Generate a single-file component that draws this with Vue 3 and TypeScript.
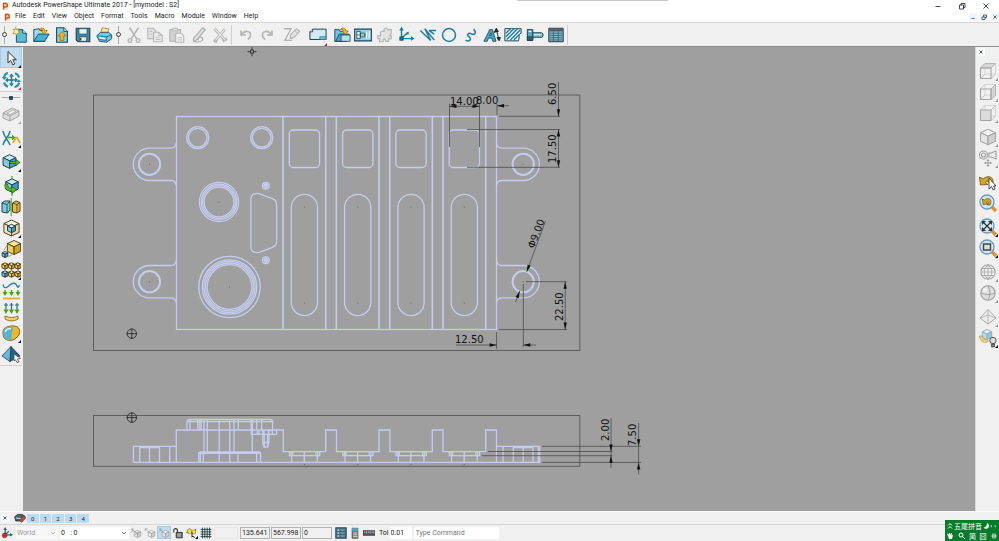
<script setup lang="ts">
import { ref } from 'vue'

type Shape = [d: string, fill: string, stroke?: string, width?: number]
interface Tool { name: string; icon: Shape[]; flyout?: string; active?: boolean }

const ink = '#24434f'
const teal = '#1f7f9f'
const pale = '#c6e9f5'
const grey = '#b5b5b5'
const mist = '#e2e2e2'
const gold = '#f0b51d'
const green = '#43a51f'

const circle = (x: number, y: number, r: number) =>
  `M${x - r} ${y}a${r} ${r} 0 1 0 ${2 * r} 0a${r} ${r} 0 1 0 ${-2 * r} 0Z`

function cube(x: number, y: number, r: number, faces: [string, string, string], line: string): Shape[] {
  const w = r * 0.95
  const h = r * 0.55
  return [
    [`M${x} ${y - r}L${x + w} ${y - h}L${x} ${y - r * 0.1}L${x - w} ${y - h}Z`, faces[0], line, 1],
    [`M${x - w} ${y - h}L${x} ${y - r * 0.1}V${y + r}L${x - w} ${y + h}Z`, faces[1], line, 1],
    [`M${x + w} ${y - h}L${x} ${y - r * 0.1}V${y + r}L${x + w} ${y + h}Z`, faces[2], line, 1],
  ]
}
const blue: [string, string, string] = ['#c8ecf6', '#7fcbe3', '#3f9dbd']
const yellow: [string, string, string] = ['#fbe9a8', '#efcf6a', '#cfa12c']
const cream: [string, string, string] = ['#fdf3d4', '#f7e7b8', '#ecd49a']
const plain: [string, string, string] = ['#f4f4f4', '#e4e4e4', '#d0d0d0']

const fileTools: Tool[] = [
  { name: 'New', icon: [['M6 4H13L17 8V18H6Z', '#58bedd', ink, 1], ['M13 4V8H17', pale, ink, 1], ['M5 1.5L6.2 4L9 3L7.6 5.6L10 7.5L7 8L6 10.5L4.6 8L2 8.4L3.8 6L2 3.6L4.6 4Z', '#fff6a0', '#8c8427', 0.7]] },
  { name: 'Open', icon: [['M2 17V4L8 3L9 5L14 5V17Z', '#9bdcf0', ink, 1], ['M2 17L7 9H19L14 17Z', '#3fb4da', ink, 1], ['M8 5C9 1.500 13.500 1.500 14.500 5H17L13.500 9.500L10 5H12C11 4 9.500 4 8 5Z', gold, '#8a6205', 0.7]] },
  { name: 'Import', icon: [['M4 2H12L16 6V18H4Z', '#7ed0e8', ink, 1.2], ['M12 2V6H16', pale, ink, 1], ['M10 6L14.500 11H12V16H8V11H5.500Z', gold, '#8a6205', 0.7]] },
  { name: 'Save', icon: [['M2.500 2.500H17.500V17.500H4.500L2.500 15.500Z', '#3c8ca8', ink, 1.3], ['M5.500 3H14.500V9H5.500Z', '#e4f4f8', ink, 0.8], ['M6 12H14V17H6Z', '#e9eef0', ink, 0.8], ['M7.500 13V16', 'none', ink, 1.5]] },
  { name: 'Print', icon: [['M6 9L8 2L15 3L14 9Z', '#ffe7a1', '#8b7a3d', 0.8], ['M2 11L6 7H15L18.500 10V14L13 18L5 17Z', '#6fcbe8', ink, 1], ['M3 11L13 12L18 10M13 12V17M5 15L12 16', 'none', '#167392', 1], ['M5 13L11 14', 'none', '#fff', 1.2]] },
]
const editTools: Tool[] = [
  { name: 'Cut', icon: [['M5 2L13 14M15 2L7 14', 'none', grey, 1.8], [circle(5.5, 16, 2) + circle(14.5, 16, 2), 'none', grey, 1.6]] },
  { name: 'Copy', icon: [['M2 2.500H8L11 5.500V14H2Z', mist, grey, 1.2], ['M8.500 7H14L18 10.500V17.500H8.500Z', '#ededed', grey, 1.2], ['M14 7V10.500H18M4 6H7M4 9H7M10.500 12.500H16M10.500 15H16', 'none', grey, 0.9]] },
  { name: 'Paste', icon: [['M2 4H14V17H2Z', '#d3d3d3', grey, 1.2], ['M5.500 2.500H10.500V5.500H5.500Z', mist, grey, 1], ['M8.500 8H14L17.500 11V18H8.500Z', '#f2f2f2', grey, 1.2], ['M10.500 13H15.500M10.500 15.500H15.500', 'none', grey, 0.9]] },
  { name: 'Format brush', icon: [['M14 2L17 4L9.500 13L6 16.500C3 17 3 13 6 11.500Z', mist, grey, 1.5], ['M3.500 17C9 19 16 17 13.500 13C11.500 11 8 14 9.500 16', 'none', grey, 1.4]] },
  { name: 'Delete', icon: [['M4 3L16 16M15.500 3.500L5 16M3 16L7 17.500M13 17L17.500 14', 'none', grey, 3.2], ['M4 3L16 16M15.500 3.500L5 16', 'none', '#eaeaea', 1.2]] },
]
const historyTools: Tool[] = [
  { name: 'Undo', icon: [['M4.500 5V10H10M5.500 9.500C8 4.500 15.500 5 15 11C14.700 13 13.500 14 12 15', 'none', grey, 1.9]] },
  { name: 'Redo', icon: [['M15.500 5V10H10M14.500 9.500C12 4.500 4.500 5 5 11C5.300 13 6.500 14 8 15', 'none', grey, 1.9]] },
]
const sheetTools: Tool[] = [
  { name: 'Edit selection', icon: [['M1 3H9L2 16H10', 'none', grey, 1.5], ['M8 14L9 9L15 3L18.500 6L12.500 12.500Z', mist, grey, 1.3], ['M13 5L16.500 8.500M8 14L11 12.500', 'none', grey, 1]] },
  { name: 'Sheet', flyout: '#e02020', icon: [['M4 3.500H19V15H1V6.500Z', '#cfeaf4', ink, 1.1], ['M1 6.500H4V3.500', '#fff', ink, 1], ['M12 12H19V15H12Z', '#6fbcd6', '#3b7386', 0.8]] },
]
const drawTools: Tool[] = [
  { name: 'Open drawing', icon: [['M2 17V4H7L8 6H13V17Z', '#6bc5e0', ink, 1], ['M3 17L7 9H18L15 17Z', '#3ea9cc', ink, 1], ['M9 10H19V17H9Z', '#b3e1ef', ink, 0.9], ['M8 4C10 1 14 2 14.500 5.500H17L13.500 9.500L10 5.500H12C11 4 10 4 8 4Z', gold, '#8a6205', 0.7]] },
  { name: 'Drawing view', icon: [['M0.700 3.500H19.300V16.500H0.700Z', '#8fd3e8', ink, 1.2], ['M3 6H7V14H3ZM7 8H12V12H7Z', '#d8eff6', ink, 0.9], ['M14 6V14M17 6V14', 'none', '#e8f8fc', 1.4], ['M3 10H13', 'none', ink, 0.6]] },
  { name: 'Assembly', icon: [['M2 11H5V8C4 6 7 5.500 9 6C8 2 13 1.500 13 4H17V8L15 11H17V14H14V17H11L10 14.500L8 15V17.500H4V14H2Z', mist, grey, 1.3]] },
  { name: 'Workplane', icon: [['M5 3V14H18M5 14L12 7', 'none', teal, 1.6], ['M2.500 5L5 0.500L7.500 5ZM15.500 11.500L19.500 14L15.500 16.500ZM13 6V9.500H9.500Z', teal], ['M3 12H7V16H3Z', '#236a83', ink, 0.6]] },
  { name: 'Line', icon: [['M1.500 5L13 16L6.500 3L17 15.500', 'none', teal, 1.6], ['M11 5H19M11 5L17 9', 'none', teal, 1.6]] },
  { name: 'Arc', icon: [[circle(10, 10, 7.2), 'none', teal, 1.7]] },
  { name: 'Curve', icon: [['M5 16C10 18 12 14 9 12C5 9 9 7 12 9C17 10.500 16.500 6 14 3.500', 'none', teal, 1.7]] },
  { name: 'Text', icon: [['M1 17L7.500 4H10.500L14.500 17H11L10 13.500H6L4.800 17ZM7.200 10.500H9.500L8.800 7.500Z', '#43a9c8', ink, 0.9], ['M15 4L17.500 15M12.500 7L14.700 2.500L17 6ZM15.500 13L18 16.500L19.300 12.500Z', '#222', '#222', 1]] },
  { name: 'Hatch', icon: [['M1 3H19V8C15 9 18 12 16 16.500H1Z', '#e3f5fa', ink, 1.1], ['M2 8L7 3M2 12L11 3M3 15L15 3M7 15.500L18 4.500M11 15.500L17 9.500', 'none', teal, 1.5]] },
  { name: 'Bolt', icon: [['M1.500 4H7.500V16H1.500Z', '#53aac5', ink, 1.1], ['M1.500 12H7.500V16H1.500Z', '#28657b', ink, 1], ['M7.500 7.500H17.500L19 9V11L17.500 12.500H7.500Z', '#78c8df', ink, 1.1], ['M3 6H6M9 9.500H16', 'none', '#def6fd', 1.2]] },
  { name: 'Parts table', icon: [['M2 2.500H18V17.500H2Z', '#7cbfd4', '#333', 1.1], ['M2.500 3.500H17.500V6H2.500Z', '#555'], ['M2.500 8H17.500M2.500 10.500H17.500M2.500 13H17.500M2.500 15.500H17.500M7 6V17M12.500 6V17', 'none', '#3d6673', 1]] },
]

const topLeft: Tool[] = [
  { name: 'Select', active: true, flyout: '#111', icon: [['M7 3.500V15L9.700 12.400L11.800 16.800L13.800 15.800L11.800 11.700H15.300Z', '#fff', '#333', 1]] },
  { name: 'Rotate view', flyout: '#e02020', icon: [['M10.500 6V14M6.500 10H14.500', 'none', teal, 1.6], ['M10.500 3.500L13 6.500H8ZM10.500 16.500L8 13.500H13ZM4 10L7 7.500V12.500ZM17 10L14 12.500V7.500Z', teal], ['M3 7C3.500 4.500 5 3.300 7 3M14 3.300C16 4 17.500 5.500 18 7.500M18 12.500C17.500 15 15.500 16.700 13.500 17M7 16.800C5 16 3.500 14.500 3 12.500', 'none', '#2d91b3', 2.2], ['M1 7H6L3 10ZM15 12H20L18 9.500Z', '#2d91b3']] },
]
const createLeft: Tool[] = [
  { name: 'Solid block', flyout: '#aaa', icon: [['M2 9L11 4L18 7V12L9 17L2 14Z', '#dcdcdc', '#a6a6a6', 1], ['M2 9L9 12L18 7M9 12V17', 'none', '#a6a6a6', 1], ['M6 9L12 6L15 7.500L9 10.500Z', '#f7f7f7', '#a6a6a6', 0.8]] },
  { name: 'Convert wireframe', flyout: '#111', icon: [['M2 3C3 9 7 12 9 17M9 3C8 9 3 12 2 17', 'none', teal, 1.5], ['M7 9.500H12', 'none', green, 1.6], ['M11 6.800L14.500 9.500L11 12.200Z', green], ['M12 15L15 9.500H16L19 15', 'none', '#e3a31c', 1.6]] },
  { name: 'Extrude', flyout: '#111', icon: [...cube(8.5, 9.5, 6.8, blue, ink), ['M9 9.500H15V7.500L19 10.500L15 13.500V11.500H9Z', '#55b62d', '#296913', 0.8]] },
]
const modifyLeft: Tool[] = [
  { name: 'Revolve', icon: [...cube(11, 9.5, 6.6, blue, ink), ['M11 0V3M11 16V20', 'none', '#48ad31', 1.3], ['M4 8C3 13 7 15.500 11 15V17.500L15.500 13.500L11 10.500V12.500C8 12.500 6.500 11 6.500 8Z', '#55b62d', '#296913', 0.8]] },
  { name: 'Mirror', icon: [['M1 6L4 4H9V13L6.500 16L1 15Z', '#7fcbe3', ink, 1], ['M1 6L6 7.500L9 4M6 7.500V16', 'none', ink, 0.9], ['M11.500 6L15 4L19 5.500V14L16 16L11.500 15Z', '#e5b944', '#59450f', 1], ['M11.500 6L16 7.500L19 5.500M16 7.500V16', 'none', '#59450f', 0.9], ['M10.200 1V19', 'none', '#4abd31', 1.2]] },
  { name: 'Core', flyout: '#111', icon: [...cube(10.5, 10, 8, cream, '#4d4530'), ...cube(10.5, 10.5, 4.2, blue, ink)] },
  { name: 'Scale', icon: [...cube(13, 8.5, 7, yellow, '#59450f'), ...cube(4, 15.5, 3, blue, ink), ['M3 11L7 5M6 18L11 16', 'none', '#53b647', 0.7]] },
  { name: 'Pattern', flyout: '#111', icon: [...cube(4, 6, 3.2, yellow, '#59450f'), ...cube(10.5, 6, 3.2, yellow, '#59450f'), ...cube(17, 6, 3.2, yellow, '#59450f'), ...cube(4, 14, 3.2, blue, ink), ...cube(10.5, 14, 3.2, yellow, '#59450f'), ...cube(17, 14, 3.2, yellow, '#59450f')] },
]
const surfaceLeft: Tool[] = [
  { name: 'Project curve', icon: [['M2 3.500C3 9 7 6 9 4C12 1 15 2 16 5C16.500 7 18 6 18.500 4', 'none', '#2d86a6', 1.4], ['M4 9V12M10.500 9V12M17 9V12', 'none', green, 1.4], ['M1.500 11H6.500L4 15ZM8 11H13L10.500 15ZM14.500 11H19.500L17 15Z', green], ['M2 17.500H19', 'none', '#e4ad35', 1.8]] },
  { name: 'Project surface', icon: [['M5 1V9M10.500 1V9M16 1V9M3 3H7M8.500 3H12.500M14 3H18', 'none', '#2b6f83', 1.2], ['M2.500 7.500H7.500L5 12ZM8 7.500H13L10.500 12ZM13.500 7.500H18.500L16 12Z', green], ['M4 14C8 16 13 16 17 14V17C13 19.500 8 19.500 4 17Z', '#efcf6a', '#7a5f1d', 0.8]] },
  { name: 'Morph', flyout: '#111', icon: [['M2 9C2 4 9 2.500 13 3C20 3.500 20 11 16 14C13 18 8 18 5 16.500C2 15 2 12 2 9Z', '#f2b727', '#725b18', 0.9], ['M2.500 9C2.500 4.500 9 3.300 12 3.500L10 17C4 17 2.500 14 2.500 9Z', '#55b5d3'], ['M4 9C5 6 7 5.500 10 5.500', 'none', '#d7f3fb', 1.6]] },
  { name: 'Pyramid', icon: [['M10 2.500L1 12L9 17.500Z', '#67b9d8', ink, 0.8], ['M10 2.500L9 17.500L19 12Z', '#1c668a', ink, 0.8], ['M13 10L19.500 14.500L16.500 15L18 18L16 18.500L14.500 15.800L13 17Z', '#fff', '#555', 0.8]] },
]

const box = (front: string, extra: Shape[]): Shape[] => [
  ['M7 2.500H17.500V13H7Z', '#f2f2f2', '#cecece', 0.8], ['M2.500 7L7 2.500M13 7L17.500 2.500M13 17.500L17.500 13M2.500 17.500L7 13', 'none', '#bdbdbd', 0.9],
  ...extra, ['M2.500 7H13V17.500H2.500Z', front, '#a5a5a5', 1.1],
]
const lens: Shape[] = [['M13.500 13.500L18 18', 'none', '#e98e24', 3.2], [circle(9, 9, 7), '#cfe6f5', '#6d9cba', 1.3]]
const viewGroups: Tool[][] = [
  [
    { name: 'Top view', flyout: '#999', icon: box('none', [['M2.500 7L7 2.500H17.500L13 7Z', '#d6d6d6', '#adadad', 0.8]]) },
    { name: 'Right view', flyout: '#999', icon: box('none', [['M13 7L17.500 2.500V13L13 17.500Z', '#d6d6d6', '#adadad', 0.8]]) },
    { name: 'Front view', flyout: '#999', icon: box('#dcdcdc', []) },
  ],
  [
    { name: 'Isometric view', flyout: '#999', icon: cube(10, 10, 7.8, plain, '#a0a0a0') },
    { name: 'View options', flyout: '#999', icon: [[circle(5.5, 7, 4) + circle(5.500, 7, 2), 'none', '#a0a0a0', 1.1], ['M11 5H13L18 3V11L13 9H11Z', '#ececec', '#a0a0a0', 1.1], ['M10 12V18M7 15H13', 'none', '#999', 1], ['M10 11L11.500 13H8.500ZM10 19L8.500 17H11.500ZM6 15L8 13.500V16.500ZM14 15L12 16.500V13.500Z', '#999']] },
  ],
  [
    { name: 'Previous view', icon: [['M1.500 5L2.500 13L10 12.500L7.500 10.500C9.500 8.500 11.500 9.500 11.500 12L15 11C16 4 9 3 5 7Z', '#d9a520', '#65501a', 0.8], ['M11 6V17L13.500 14.500L15 18L17 17L15.500 14H18Z', '#fff', '#222', 0.8]] },
    { name: 'Last zoom', icon: [...lens, ['M4.500 6L5 11.500L10 11L8 9.500C10 8 11.500 9.500 9.500 12L12 12C15 6 10 4 6.500 7Z', '#d9a520', '#65501a', 0.7]] },
  ],
  [
    { name: 'Zoom full', flyout: '#111', icon: [...lens, ['M5.500 5.500L12.500 12.500M12.500 5.500L5.500 12.500', 'none', '#333', 1.2], ['M4 4H8L4 8ZM14 4V8L10 4ZM4 14V10L8 14ZM14 14H10L14 10Z', '#333']] },
    { name: 'Zoom box', flyout: '#111', icon: [...lens, ['M5.500 6H12.500V12H5.500Z', '#d5e2dc', '#444', 1.4]] },
  ],
  [
    { name: 'Wireframe', flyout: '#999', icon: [[circle(10, 10, 7.2), '#f1f1f1', '#a5a5a5', 1.1], ['M10 3V17M3 10H17M10 3C5 7 5 13 10 17M10 3C15 7 15 13 10 17M4 6.500H16M4 13.500H16', 'none', '#aaa', 0.9]] },
    { name: 'Shaded', flyout: '#999', icon: [[circle(10, 10, 7.2), '#dedede', '#9d9d9d', 1.1], ['M10 3C12.500 7 12.500 13 10 17M3 10C7 12 13 12 17 10', 'none', '#999', 0.9], [circle(7, 7, 2), '#f3f3f3']] },
  ],
  [
    { name: 'Transparent', flyout: '#999', icon: [['M10 2.500L18 11L10 17L2 11Z', '#ededed', '#a5a5a5', 0.9], ['M10 2.500V17M2 11L10 8L18 11', 'none', '#aaa', 0.8]] },
    { name: 'Lighting', flyout: '#111', icon: [...cube(9, 6.5, 5, ['#e4f4fa', '#b7dcea', '#93c6db'], '#8eb3c2'), ['M1.500 8C2 14 7 16 10.500 13L7.500 11C5.500 11.500 4.500 10.500 4.500 8Z', '#efd27e', '#b69643', 0.7], [circle(15, 12.5, 3.2), '#ddd', '#555', 1], ['M13.500 16H16.500V19H13.500Z', '#777', '#444', 0.7]] },
  ],
]

const greyCube: Shape[] = [...cube(12.5, 11.5, 6, plain, '#999'), ['M2 3L8 8M3 9L5 2M2 5H7', 'none', '#a5a5a5', 1.3]]
const snapTools: Tool[] = [
  { name: 'Snap points', icon: [...greyCube, ['M8 7L15 14M15 7L8 14', 'none', '#999', 1.1]] },
  { name: 'Snap edges', icon: [...cube(12.5, 11.5, 6, plain, '#999'), ['M2 3L8 8M2 3H6M2 3V7', 'none', '#aaa', 1.4]] },
  { name: 'Snap faces', active: true, icon: greyCube },
  { name: 'Lock', icon: [['M7 9H17V18H7Z', '#777', '#222', 1.4], ['M3 9V5C3 2 9 2 9 5V9', 'none', '#333', 1.8], ['M9 12H15M9 15H15', 'none', '#ddd', 1.2]] },
  { name: 'Smart cursor', flyout: '#111', icon: [['M1 10L6 4L10 9L17 4', 'none', '#555', 2], [circle(6, 7, 4), '#ffdf35', '#86701b', 1], [circle(13, 8, 3.4), '#ffdf35', '#86701b', 1], ['M10 9V17L12 15L14 18', 'none', '#222', 1.6]] },
  { name: 'Grid', icon: [['M4 1V19M8 1V19M12 1V19M16 1V19M1 4H19M1 8H19M1 12H19M1 16H19', 'none', '#1d4048', 1.5]] },
]
const readoutTools: Tool[] = [
  { name: 'Coordinates', icon: [['M1 1H19V19H1Z', '#3d6977', '#2e4a54', 1.2], ['M4 5H7M4 10H7M4 15H7', 'none', '#cfe9ef', 2.6], ['M9 5H16M9 10H16M9 15H16', 'none', '#8ec1d0', 1.8]] },
  { name: 'Calculator', icon: [['M5 2H15V19H5Z', '#6c7479', '#555', 1], ['M5 2H15V7H5Z', '#48a8cc'], ['M7 10H14M7 13H14M7 16H14', 'none', '#ddd', 1.6]] },
  { name: 'Measure', icon: [['M0 6H20V14H0Z', '#555', '#333', 1], ['M3 7V10M6 7V11M9 7V10M12 7V11M15 7V10M18 7V11', 'none', '#eee', 1]] },
]
const axes: Shape[] = [['M7 2V13H18M7 13L13 7', 'none', '#256c86', 2.2], ['M4 5L7 0L10 5ZM15 10L20 13L15 16Z', '#256c86'], [circle(6, 14, 4), '#d9252a', '#8c1519', 0.8]]
const eraser: Shape[] = [['M1 8L6 4H14L18 7L12 15H3Z', '#41636d', '#222', 1.2], ['M3 10L12 11', 'none', '#c4dde4', 1.8], ['M9 14L16 6L20 9L13 17Z', '#bd5046', '#551d18', 1]]

const menus = ['File', 'Edit', 'View', 'Object', 'Format', 'Tools', 'Macro', 'Module', 'Window', 'Help']
const levels = [0, 1, 2, 3, 4]
const workplane = ref('World')
const level = ref('0  : 0')
const coords = ref(['135.641', '567.998', '0'])
const tolerance = ref('0.01')
const command = ref('')

const bays = [0, 1, 2, 3].map((i) => i * 53.3)
const lugs = [
  { x: 149.5, y: 164.3, side: 1 }, { x: 149.5, y: 281.7, side: 1 },
  { x: 523.2, y: 164.3, side: -1 }, { x: 523.2, y: 281.7, side: -1 },
]
const ribs = [283, 325.7, 336.3, 379, 389.7, 432.3, 443, 485.7]
const rings = [
  { x: 197.7, y: 137.7, radii: [11, 9.3] }, { x: 261.7, y: 137.7, radii: [11, 9.3] },
  { x: 219, y: 202, radii: [19.6, 17.8, 16.4, 14.9] },
  { x: 229.5, y: 287, radii: [30.7, 27.2, 25.6, 24, 22.3] },
]
const screws = [185.7, 260.3]
const arrows = [
  { x: 449.5, y: 106.3, a: 180 }, { x: 479.5, y: 106.3, a: 0 }, { x: 497, y: 105.7, a: 180 },
  { x: 558.5, y: 116.3, a: 90 }, { x: 558.5, y: 129.5, a: -90 }, { x: 558.5, y: 167.3, a: 90 },
  { x: 526.7, y: 271.8, a: 111 }, { x: 519.7, y: 291, a: -69 },
  { x: 565.2, y: 281.7, a: -90 }, { x: 565.2, y: 329.6, a: 90 },
  { x: 496.6, y: 345, a: 0 }, { x: 523.3, y: 345, a: 180 },
  { x: 611, y: 451.5, a: 90 }, { x: 611, y: 455.7, a: -90 },
  { x: 638.6, y: 446.3, a: 90 }, { x: 638.6, y: 462.4, a: -90 },
]
const dimensions = [
  { text: '14.00', x: 450, y: 105, a: 0 }, { text: '8.00', x: 476, y: 104, a: 0 },
  { text: '6.50', x: 556, y: 105, a: -90 }, { text: '17.50', x: 556, y: 163, a: -90 },
  { text: 'Φ9.00', x: 534, y: 249, a: -69 }, { text: '22.50', x: 563, y: 321, a: -90 },
  { text: '12.50', x: 455, y: 343, a: 0 }, { text: '2.00', x: 609, y: 441, a: -90 },
  { text: '7.50', x: 636, y: 446, a: -90 },
]
const profile = 'M176.300 462.300V430H283.300V451.700H325.700V430H336.500V451.700H379V430H390V451.700H432.300V430H443V451.700H485.700V430H496.500V462.300'
const strips = { file: fileTools, edit: editTools, history: historyTools, sheet: sheetTools, draw: drawTools }
const leftStrips = [createLeft, modifyLeft, surfaceLeft]
</script>

<template>
  <div class="app">
    <header>
      <div class="title">
        <svg class="logo" viewBox="0 0 8 8" aria-hidden="true"><path class="logo-back" d="M2 0H7V8H2Z" /><path class="logo-mark" d="M2.500 7.500V1.500H4.500C7 1.500 7 5 4.500 5H3" /></svg>
        <h1>Autodesk PowerShape Ultimate 2017 - [mymodel : S2]</h1>
        <div class="window-buttons">
          <button aria-label="Minimize"><svg viewBox="0 0 8 8"><path d="M1.500 4.500H6.500" /></svg></button>
          <button aria-label="Restore"><svg viewBox="0 0 8 8"><path d="M1.500 3H5.500V7H1.500ZM3 3V1.500H7V5.500H5.500" /></svg></button>
          <button aria-label="Close"><svg viewBox="0 0 8 8"><path d="M1.500 1.500L6.500 6.500M6.500 1.500L1.500 6.500" /></svg></button>
        </div>
        <div class="shade"></div>
      </div>
      <div class="menubar">
        <svg class="logo" viewBox="0 0 8 8" aria-hidden="true"><path class="logo-back" d="M2 0H7V8H2Z" /><path class="logo-mark" d="M2.500 7.500V1.500H4.500C7 1.500 7 5 4.500 5H3" /></svg>
        <nav><a v-for="m in menus" :key="m" href="#">{{ m }}</a></nav>
        <div class="document-buttons">
          <button aria-label="Minimize document"><svg viewBox="0 0 8 8"><path d="M2.500 5.500H5.500" /></svg></button>
          <button aria-label="Restore document"><svg viewBox="0 0 8 8"><path d="M2 4H5V6.500H2ZM3.500 4V2H6.500V4.500H5" /></svg></button>
          <button aria-label="Close document"><svg viewBox="0 0 8 8"><path d="M2.500 2.500L5.500 5.500M5.500 2.500L2.500 5.500" /></svg></button>
        </div>
      </div>
      <div class="toolbar">
        <template v-for="(tools, key) in strips" :key="key">
          <span v-if="key === 'file' || key === 'edit'" class="grip"></span>
          <span v-if="key === 'history'" class="rule"></span>
          <div class="strip" :class="key">
            <button v-for="t in tools" :key="t.name" class="tool" :aria-label="t.name">
              <svg class="icon" viewBox="0 0 20 20"><path v-for="(s, i) in t.icon" :key="i" :d="s[0]" :fill="s[1]" :stroke="s[2] || 'none'" :stroke-width="s[3] || 0" fill-rule="evenodd" /></svg>
              <svg v-if="t.flyout" class="flyout" viewBox="0 0 3 3"><path d="M3 0V3H0Z" :fill="t.flyout" /></svg>
            </button>
          </div>
        </template>
        <span class="rule"></span>
      </div>
    </header>

    <main>
      <aside class="left">
        <div class="column first">
          <button v-for="t in topLeft" :key="t.name" class="tool" :class="{ active: t.active }" :aria-label="t.name">
            <svg class="icon" viewBox="0 0 20 20"><path v-for="(s, i) in t.icon" :key="i" :d="s[0]" :fill="s[1]" :stroke="s[2] || 'none'" :stroke-width="s[3] || 0" /></svg>
            <svg v-if="t.flyout" class="flyout" viewBox="0 0 3 3"><path d="M3 0V3H0Z" :fill="t.flyout" /></svg>
          </button>
        </div>
        <span class="level-grip"></span>
        <div v-for="(tools, n) in leftStrips" :key="n" class="column" :class="{ roomy: n === 0 }">
          <button v-for="t in tools" :key="t.name" class="tool" :aria-label="t.name">
            <svg class="icon" viewBox="0 0 20 20"><path v-for="(s, i) in t.icon" :key="i" :d="s[0]" :fill="s[1]" :stroke="s[2] || 'none'" :stroke-width="s[3] || 0" /></svg>
            <svg v-if="t.flyout" class="flyout" viewBox="0 0 3 3"><path d="M3 0V3H0Z" :fill="t.flyout" /></svg>
          </button>
        </div>
        <span class="end"></span>
      </aside>

      <section class="canvas" aria-label="Model view">
        <svg class="drawing" viewBox="23 47 952 464" preserveAspectRatio="xMinYMin meet">
          <g class="frame">
            <rect x="93.5" y="95" width="486.300" height="255.500" />
            <rect x="93.500" y="415.500" width="486.300" height="50.800" />
          </g>
          <g class="model">
            <rect x="176.500" y="116.500" width="320" height="213" />
            <path v-for="x in ribs" :key="x" class="rib" :d="`M${x} 116.500V329.500`" />
            <g v-for="(l, i) in lugs" :key="i" :transform="`translate(${l.x} ${l.y}) scale(${l.side} 1)`">
              <path d="M26.800 -21.500Q26.300 -16.200 21 -16.200H0A16.200 16.200 0 0 0 0 16.200H21Q26.300 16.200 26.800 21.500" />
              <circle class="hole" r="10.600" />
              <path class="dot" d="M-0.500 0H0.500" />
            </g>
            <g v-for="(r, i) in rings" :key="i">
              <circle v-for="q in r.radii" :key="q" :cx="r.x" :cy="r.y" :r="q" />
              <path v-if="i > 1" class="dot" :d="`M${r.x - 0.5} ${r.y}h1`" />
            </g>
            <g v-for="y in screws" :key="y">
              <circle cx="265.800" :cy="y" r="3.400" /><circle cx="265.800" :cy="y" r="1.700" />
              <path :d="`M262.300 ${y}h7M265.800 ${y - 3.5}v7`" />
            </g>
            <path d="M250.800 199.500Q251 192.500 259 193.600L272.500 198.600Q276.700 200.500 276.700 205V241Q276.700 245.500 272.500 247.400L259 252.400Q251 253.500 250.800 246.500Z" />
            <g v-for="b in bays" :key="b" :transform="`translate(${b} 0)`">
              <rect x="289.300" y="130" width="30.300" height="37.500" rx="4" />
              <rect x="291.300" y="194.300" width="26.200" height="121.300" rx="13.100" />
              <path class="dot" d="M303.900 207h1M303.900 303h1M303.900 464.500h1" />
              <path d="M289.500 451.700V455.700H319.700V451.700M291.200 451.700V455.700M292.700 451.700V455.700M316 451.700V455.700M317.700 451.700V455.700M291.700 455.700V462.300M304.300 451.700V462.300M317.300 455.700V462.300" />
            </g>
            <path :d="profile" />
            <path d="M133.400 462.300H540M133.400 462.300V446.300H176.300M139.700 447.300V462.300M139.700 447.600H159.500M149.500 447V462.300M159.500 447V462.300M169.700 446.300V462.300" />
            <path d="M496.500 446.300H539.700V462.300M503 446.300V462.300M513.300 447.600H533M513.300 447V462.300M523.200 447V462.300M533 447V462.300M538.300 447V462.300" />
            <path d="M187 430V422Q187 419.300 190 419.300H270Q272.600 419.300 272.600 422V430M187 421.500H272.600M190 420V430M197.700 419.500V430M199.700 419.500V430M201.300 419.500V430M204 419.500V451.700M207.300 419.500V451.700M219.200 419.500V462.300M229.700 419.500V462.300M234 419.500V451.700M238.300 419.500V430M251.200 419.500V430M252.300 419.500V451.700M256.700 419.500V430M261.700 419.500V430" />
            <path d="M198.700 462.300V454Q198.700 452 201 452H258.500Q260.600 452 260.600 454V462.300M198.700 453.300H260.600M200.300 453V462.300M203.300 453V462.300M238 453V462.300M256.700 453V462.300" />
            <path d="M251.200 430V434.300H276.700V430M257.300 430V434.300M259 430V434.300M264 430V434.300M268.500 430V434.300M272.300 430V434.300M262.700 430V442.500H269V430M264.300 434V447H267.500V434M262.700 442.500L264 447M269 442.500L267.500 447" />
          </g>
          <g class="leader">
            <path d="M449.500 104V147M479.500 104V147M449.500 106.300H479.500M497 104V115M497 105.700H509M499 116.300H560M467 129.500H560M467 167.300H560M558.500 82V116M558.500 129.500V167.300" />
            <path d="M545.500 221L526.700 271.800M515.500 302L519.700 291M526 281.700H567M499 329.600H567M565.200 281.700V329.600M456 345H496.600M496.600 332V349M523.300 284V347M523.300 345H536" />
            <path d="M542 446.300H641M488 451.500H612.500M482 455.700H612.500M542 462.400H641M611 418V468M638.600 423V474.500" />
          </g>
          <g class="arrow"><path v-for="(a, i) in arrows" :key="i" d="M0 0L-7 -1.700V1.700Z" :transform="`translate(${a.x} ${a.y}) rotate(${a.a})`" /></g>
          <g class="dimension"><text v-for="(d, i) in dimensions" :key="i" :transform="`translate(${d.x} ${d.y}) rotate(${d.a})`">{{ d.text }}</text></g>
          <g class="datum">
            <circle cx="131.800" cy="333.700" r="4.700" /><path d="M126.500 333.700H137.100M131.800 328.400V339" />
            <circle cx="131.800" cy="417.600" r="4.700" /><path d="M126.500 417.600H137.100M131.800 412.300V422.900" />
            <path d="M247.500 51.700H250.500M253.500 51.700H256.500M252 47.200V50.200M252 53.200V56.200M250.500 50.200H253.500V53.200H250.500Z" />
          </g>
        </svg>
      </section>

      <aside class="right">
        <button class="close" aria-label="Close toolbar"><svg viewBox="0 0 8 8"><path d="M2.500 2.500L5.500 5.500M5.500 2.500L2.500 5.500" /></svg></button>
        <div v-for="(tools, n) in viewGroups" :key="n" class="column">
          <button v-for="t in tools" :key="t.name" class="tool" :aria-label="t.name">
            <svg class="icon" viewBox="0 0 20 20"><path v-for="(s, i) in t.icon" :key="i" :d="s[0]" :fill="s[1]" :stroke="s[2] || 'none'" :stroke-width="s[3] || 0" /></svg>
            <svg v-if="t.flyout" class="flyout" viewBox="0 0 3 3"><path d="M3 0V3H0Z" :fill="t.flyout" /></svg>
          </button>
        </div>
      </aside>
    </main>

    <footer>
      <div class="levels">
        <button class="close" aria-label="Close level bar"><svg viewBox="0 0 8 8"><path d="M2.500 2.500L5.500 5.500M5.500 2.500L2.500 5.500" /></svg></button>
        <svg class="small" viewBox="0 0 20 20" aria-hidden="true"><path v-for="(s, i) in eraser" :key="i" :d="s[0]" :fill="s[1]" :stroke="s[2]" :stroke-width="s[3]" /></svg>
        <div class="tabs"><button v-for="n in levels" :key="n">{{ n }}</button></div>
      </div>
      <div class="status">
        <svg class="small" viewBox="0 0 20 20" aria-hidden="true"><path v-for="(s, i) in axes" :key="i" :d="s[0]" :fill="s[1]" :stroke="s[2] || 'none'" :stroke-width="s[3] || 0" /></svg>
        <div class="picker world">
          <select v-model="workplane" aria-label="Workplane" disabled><option>World</option></select>
          <svg viewBox="0 0 8 8"><path d="M2 3L4 5L6 3" /></svg>
        </div>
        <div class="picker level">
          <select v-model="level" aria-label="Level"><option value="0  : 0">0 &nbsp;&nbsp;: 0</option></select>
          <svg viewBox="0 0 8 8"><path d="M2 3L4 5L6 3" /></svg>
        </div>
        <div class="snaps">
          <button v-for="t in snapTools" :key="t.name" class="mini" :class="{ active: t.active }" :aria-label="t.name">
            <svg class="small" viewBox="0 0 20 20"><path v-for="(s, i) in t.icon" :key="i" :d="s[0]" :fill="s[1]" :stroke="s[2] || 'none'" :stroke-width="s[3] || 0" /></svg>
            <svg v-if="t.flyout" class="flyout" viewBox="0 0 3 3"><path d="M3 0V3H0Z" :fill="t.flyout" /></svg>
          </button>
        </div>
        <span class="blank"></span>
        <div class="coords"><input v-for="(c, i) in coords" :key="i" v-model="coords[i]" :aria-label="'XYZ'[i]"></div>
        <div class="readouts">
          <button v-for="t in readoutTools" :key="t.name" class="mini" :aria-label="t.name">
            <svg class="small" viewBox="0 0 20 20"><path v-for="(s, i) in t.icon" :key="i" :d="s[0]" :fill="s[1]" :stroke="s[2] || 'none'" :stroke-width="s[3] || 0" /></svg>
          </button>
        </div>
        <label for="tolerance">Tol</label>
        <input id="tolerance" v-model="tolerance" class="tolerance">
        <input v-model="command" class="command" aria-label="Command" placeholder="Type Command">
      </div>
    </footer>

    <div class="ime" lang="zh">
      <div><svg viewBox="0 0 8 8"><path d="M2 3.500L4 1.500L6 3.500M2 6.500L4 4.500L6 6.500" /></svg><span>五尾拼音</span><svg viewBox="0 0 8 8"><path class="solid" d="M5 1A3 3 0 1 1 1.500 5.500C4 5.500 5 3 5 1Z" /></svg><svg viewBox="0 0 8 8"><path class="solid" d="M1.500 3A1 1 0 1 0 2.500 4.500L1.500 6M5.500 3A1 1 0 1 0 6.500 4.500L5.500 6" /></svg></div>
      <div><svg viewBox="0 0 8 8"><path class="solid" d="M2 4L1 2L2 1.500L3 3V1H4V3L5 1L6 1.500L5.500 3.500L7 3L6 7H3Z" /></svg><svg viewBox="0 0 8 8"><circle cx="3" cy="3" r="2" /><path d="M4.500 4.500L7 7" /></svg><span>简</span><span>囧</span><svg viewBox="0 0 8 8"><path class="gear" d="M2.500 2.500h3v3h-3Z" /></svg></div>
    </div>
  </div>
</template>

<style>
body { margin: 0; }
</style>

<style scoped>
.app { min-height: 100vh; display: flex; flex-direction: column; background: #f0f0f0; color: #1c1c1c; font: 7px/10px Roboto, "Noto Sans CJK SC", sans-serif; position: relative; overflow: hidden; }
* { box-sizing: border-box; }
button { appearance: none; border: 0; background: none; padding: 0; margin: 0; font: inherit; color: inherit; display: grid; place-items: center; }
input, select { font: inherit; color: inherit; margin: 0; border-radius: 0; min-width: 0; }
a { color: inherit; text-decoration: none; }
svg { display: block; flex: none; }
header, footer { flex: none; }
.title { height: 11px; display: flex; align-items: center; gap: 3px; padding-left: 1px; background: #fff; position: relative; }
h1 { margin: 0; font-size: 7px; font-weight: 400; line-height: 11px; }
.logo { width: 8px; height: 8px; }
.logo-back { fill: #fbe0cc; }
.logo-mark { fill: none; stroke: #c9581a; stroke-width: 1.5; }
.window-buttons { margin-left: auto; display: flex; gap: 16px; padding-right: 9px; }
.window-buttons svg, .document-buttons svg, .close svg { width: 8px; height: 8px; fill: none; stroke: #333; stroke-width: 0.9; }
.shade { position: absolute; left: 517px; top: 0; width: 151px; height: 1px; background: #c8c8c8; }
.menubar { height: 11px; display: flex; align-items: center; padding-left: 3px; background: #fff; }
nav { display: flex; gap: 7px; padding-left: 4px; }
nav a { line-height: 11px; }
.document-buttons { margin-left: auto; display: flex; gap: 3px; }
.document-buttons svg { background: #f1f4f8; stroke: #3d566e; }
.toolbar { height: 25px; display: flex; align-items: center; border-top: 1px solid #d6d6d6; border-bottom: 1px solid #8b8b8b; }
.grip { width: 9px; height: 18px; display: grid; place-items: center; background: linear-gradient(#aaa, #aaa) center / 1px 18px no-repeat; }
.grip::before { content: ""; width: 5px; height: 5px; border: 1px solid #444; border-radius: 50%; background: #f0f0f0; box-sizing: border-box; }
.rule { width: 1px; height: 20px; background: #cfcfcf; }
.strip { display: grid; grid-auto-flow: column; grid-auto-columns: 1fr; }
.file { width: 105px; }
.edit { width: 108px; }
.history { width: 42px; margin: 0 2px 0 3px; }
.sheet { width: 52px; }
.draw { width: 236px; }
.tool { position: relative; height: 21px; }
.toolbar .tool { height: 23px; }
.icon { width: 18px; height: 18px; }
aside .icon { width: 20px; height: 20px; }
.flyout { position: absolute; right: 1px; bottom: 0; width: 3px; height: 3px; }
.sheet .flyout { right: 4px; }
main { flex: 1; display: flex; min-height: 0; }
aside { flex: none; display: flex; flex-direction: column; }
.left { width: 23px; padding-right: 1px; }
.right { width: 24px; gap: 3px; border-left: 1px solid #d9d9d9; }
.column { display: grid; grid-auto-rows: 21px; }
.first { grid-auto-rows: 22px; border-bottom: 1px solid #cfcfcf; }
.roomy { grid-auto-rows: 24px; }
.active { background: #bfdcf3; outline: 1px solid #a4cbea; outline-offset: -1px; }
.level-grip { height: 11px; display: grid; place-items: center; background: linear-gradient(#aaa, #aaa) center / 18px 1px no-repeat; }
.level-grip::before { content: ""; width: 4px; height: 4px; background: #34464e; border-radius: 1px; }
.end { height: 1px; background: #cfcfcf; margin-top: 1px; }
.close { width: 10px; height: 10px; }
.right .close svg, .levels .close svg { stroke: #34516e; background: #fafcff; }
.canvas { flex: 1; min-width: 0; background: #9f9f9f; }
.drawing { width: 100%; height: auto; }
.frame { fill: none; stroke: #5e5e5e; stroke-width: 1; }
.model { fill: none; stroke: #c6ccf0; stroke-width: 1.3; }
.model .hole { stroke-width: 2; }
.model .rib { stroke-width: 1.5; }
.model .dot { stroke: #666; stroke-width: 1; }
.leader { fill: none; stroke: #4c4c4c; stroke-width: 0.8; }
.arrow { fill: #111; }
.dimension { fill: #111; font: 10px "DejaVu Sans", sans-serif; }
.datum { fill: none; stroke: #2b2b2b; stroke-width: 0.9; }
.levels { height: 14px; display: flex; align-items: center; border-top: 1px solid #fafafa; border-bottom: 1px solid #d5d5d5; }
.levels .small { margin: 0 1px 0 4px; }
.small { width: 12px; height: 12px; }
.tabs { display: grid; grid-template-columns: repeat(5, 1fr); gap: 1px; width: 62px; font-size: 6px; line-height: 9px; }
.tabs button { background: #b9dbf5; height: 9px; }
.status { height: 16px; display: flex; align-items: center; padding: 0 2px 1px 1px; }
.picker { position: relative; height: 12px; background: #fff; }
.picker select { appearance: none; border: 0; background: none; width: 100%; height: 12px; padding: 0 3px 0 1px; line-height: 12px; }
.picker svg { position: absolute; right: 1px; top: 2px; width: 8px; height: 8px; fill: none; stroke: #666; stroke-width: 0.9; pointer-events: none; }
.world { width: 42px; margin: 0 2px 0 3px; background: #f7f7f7; color: #999; }
.world select:disabled { color: #999; opacity: 1; }
.world svg { stroke: #bbb; }
.level { width: 69px; }
.snaps { display: grid; grid-template-columns: repeat(6, 14px); }
.mini { position: relative; height: 13px; }
.blank { width: 24px; height: 12px; margin: 0 2px 0 1px; border: 1px solid #e6e6e6; }
.coords { display: grid; grid-template-columns: repeat(3, 30px); gap: 1px; }
.coords input { height: 12px; border: 1px solid #b2b2b2; background: #f0f0f0; padding: 0 1px; }
.readouts { display: grid; grid-template-columns: repeat(3, 14px); margin: 0 3px 0 2px; }
label { line-height: 12px; }
.tolerance { width: 22px; height: 12px; border: 0; background: #fff; padding: 0 1px; margin-left: 1px; }
.command { width: 85px; height: 12px; border: 0; background: #fff; padding: 0 2px; margin-left: 2px; }
.command::placeholder { color: #777; opacity: 1; }
.ime { position: absolute; right: 0; bottom: 0; width: 54px; height: 21px; background: #087b2b; color: #fff; display: grid; grid-template-rows: 10px 10px; padding: 1px; font: 7px/9px "Noto Sans CJK SC", sans-serif; }
.ime div { display: flex; align-items: center; justify-content: space-between; }
.ime svg { width: 8px; height: 8px; fill: none; stroke: #fff; stroke-width: 1; }
.ime .solid { fill: #fff; stroke: none; }
.ime .gear { stroke-dasharray: 1 1; stroke-width: 2; }
</style>
